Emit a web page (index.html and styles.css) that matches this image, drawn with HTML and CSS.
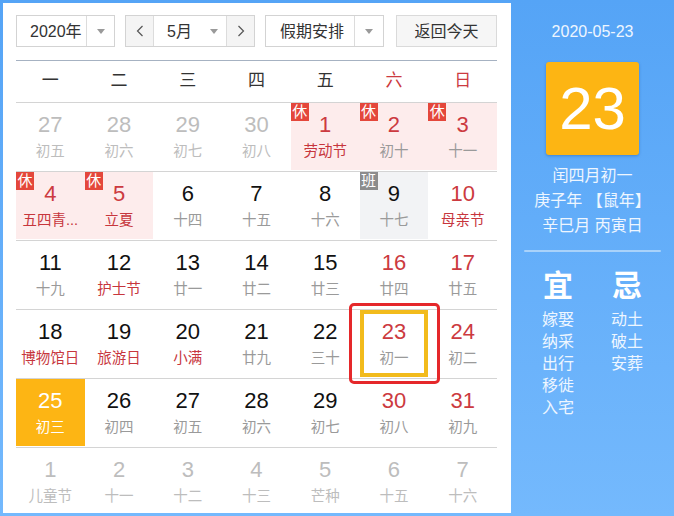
FILE: index.html
```html
<!DOCTYPE html>
<html lang="zh-CN">
<head>
<meta charset="utf-8">
<title>万年历</title>
<link rel="stylesheet" href="styles.css">
</head>
<body>
<div class="app">
  <div class="main">
    <div class="toolbar">
      <div class="select year">
        <span class="sel-text">2020年</span>
        <span class="sel-arrow"><i class="tri"></i></span>
      </div>
      <div class="month-group">
        <span class="nav-btn"><svg width="8" height="12" viewBox="0 0 8 12"><polyline points="6.5,1 1.5,6 6.5,11" fill="none" stroke="#555" stroke-width="1.2"/></svg></span>
        <span class="month-sel"><span class="sel-text">5月</span><i class="tri"></i></span>
        <span class="nav-btn"><svg width="8" height="12" viewBox="0 0 8 12"><polyline points="1.5,1 6.5,6 1.5,11" fill="none" stroke="#555" stroke-width="1.2"/></svg></span>
      </div>
      <div class="select holiday">
        <span class="sel-text">假期安排</span>
        <span class="sel-arrow"><i class="tri"></i></span>
      </div>
      <div class="today-btn">返回今天</div>
    </div>

    <div class="calendar">
      <div class="week-head">
        <span>一</span><span>二</span><span>三</span><span>四</span><span>五</span><span class="red">六</span><span class="red">日</span>
      </div>

      <div class="row">
        <div class="cell other"><span class="num">27</span><span class="lunar">初五</span></div>
        <div class="cell other"><span class="num">28</span><span class="lunar">初六</span></div>
        <div class="cell other"><span class="num">29</span><span class="lunar">初七</span></div>
        <div class="cell other"><span class="num">30</span><span class="lunar">初八</span></div>
        <div class="cell rest"><i class="badge">休</i><span class="num red">1</span><span class="lunar fest">劳动节</span></div>
        <div class="cell rest"><i class="badge">休</i><span class="num red">2</span><span class="lunar">初十</span></div>
        <div class="cell rest"><i class="badge">休</i><span class="num red">3</span><span class="lunar">十一</span></div>
      </div>

      <div class="row">
        <div class="cell rest"><i class="badge">休</i><span class="num red">4</span><span class="lunar fest">五四青...</span></div>
        <div class="cell rest"><i class="badge">休</i><span class="num red">5</span><span class="lunar fest">立夏</span></div>
        <div class="cell"><span class="num">6</span><span class="lunar">十四</span></div>
        <div class="cell"><span class="num">7</span><span class="lunar">十五</span></div>
        <div class="cell"><span class="num">8</span><span class="lunar">十六</span></div>
        <div class="cell work"><i class="badge grey">班</i><span class="num">9</span><span class="lunar">十七</span></div>
        <div class="cell"><span class="num red">10</span><span class="lunar fest">母亲节</span></div>
      </div>

      <div class="row">
        <div class="cell"><span class="num">11</span><span class="lunar">十九</span></div>
        <div class="cell"><span class="num">12</span><span class="lunar fest">护士节</span></div>
        <div class="cell"><span class="num">13</span><span class="lunar">廿一</span></div>
        <div class="cell"><span class="num">14</span><span class="lunar">廿二</span></div>
        <div class="cell"><span class="num">15</span><span class="lunar">廿三</span></div>
        <div class="cell"><span class="num red">16</span><span class="lunar">廿四</span></div>
        <div class="cell"><span class="num red">17</span><span class="lunar">廿五</span></div>
      </div>

      <div class="row">
        <div class="cell"><span class="num">18</span><span class="lunar fest">博物馆日</span></div>
        <div class="cell"><span class="num">19</span><span class="lunar fest">旅游日</span></div>
        <div class="cell"><span class="num">20</span><span class="lunar fest">小满</span></div>
        <div class="cell"><span class="num">21</span><span class="lunar">廿九</span></div>
        <div class="cell"><span class="num">22</span><span class="lunar">三十</span></div>
        <div class="cell today"><span class="num red">23</span><span class="lunar">初一</span><i class="mark"></i></div>
        <div class="cell"><span class="num red">24</span><span class="lunar">初二</span></div>
      </div>

      <div class="row">
        <div class="cell selected"><span class="num">25</span><span class="lunar">初三</span></div>
        <div class="cell"><span class="num">26</span><span class="lunar">初四</span></div>
        <div class="cell"><span class="num">27</span><span class="lunar">初五</span></div>
        <div class="cell"><span class="num">28</span><span class="lunar">初六</span></div>
        <div class="cell"><span class="num">29</span><span class="lunar">初七</span></div>
        <div class="cell"><span class="num red">30</span><span class="lunar">初八</span></div>
        <div class="cell"><span class="num red">31</span><span class="lunar">初九</span></div>
      </div>

      <div class="row">
        <div class="cell other"><span class="num">1</span><span class="lunar">儿童节</span></div>
        <div class="cell other"><span class="num">2</span><span class="lunar">十一</span></div>
        <div class="cell other"><span class="num">3</span><span class="lunar">十二</span></div>
        <div class="cell other"><span class="num">4</span><span class="lunar">十三</span></div>
        <div class="cell other"><span class="num">5</span><span class="lunar">芒种</span></div>
        <div class="cell other"><span class="num">6</span><span class="lunar">十五</span></div>
        <div class="cell other"><span class="num">7</span><span class="lunar">十六</span></div>
      </div>
    </div>
  </div>

  <div class="side">
    <div class="side-date">2020-05-23</div>
    <div class="big-day">23</div>
    <div class="side-line first">闰四月初一</div>
    <div class="side-line">庚子年 【鼠年】</div>
    <div class="side-line">辛巳月 丙寅日</div>
    <div class="side-sep"></div>
    <div class="yiji">
      <div class="yj-col">
        <div class="yj-title">宜</div>
        <div class="yj-item">嫁娶</div>
        <div class="yj-item">纳采</div>
        <div class="yj-item">出行</div>
        <div class="yj-item">移徙</div>
        <div class="yj-item">入宅</div>
      </div>
      <div class="yj-col">
        <div class="yj-title">忌</div>
        <div class="yj-item">动土</div>
        <div class="yj-item">破土</div>
        <div class="yj-item">安葬</div>
      </div>
    </div>
  </div>
</div>
</body>
</html>
```

FILE: styles.css
```css
* { box-sizing: border-box; }
html, body {
  margin: 0;
  padding: 0;
  width: 674px;
  height: 516px;
  overflow: hidden;
}
body {
  font-family: "Liberation Sans", "Noto Sans CJK SC", sans-serif;
  background: linear-gradient(to bottom, #55a4f6, #74b9fd);
}
.app {
  display: flex;
  width: 674px;
  height: 516px;
}
.main {
  margin: 3px 0 3px 3px;
  width: 508px;
  height: 510px;
  background: #fff;
  padding: 12px 14px 0 13px;
  overflow: hidden;
  position: relative;
}
.toolbar {
  display: flex;
  height: 32px;
  font-size: 16px;
  color: #333;
}
.select {
  display: flex;
  height: 32px;
  border: 1px solid #d3d3d3;
  background: #fff;
}
.sel-text {
  line-height: 31px;
  white-space: nowrap;
}
.year { width: 99px; }
.year .sel-text { width: 69px; padding-left: 13px; }
.sel-arrow {
  flex: 1;
  border-left: 1px solid #dcdcdc;
  display: flex;
  align-items: center;
  justify-content: center;
}
.tri {
  display: block;
  width: 0;
  height: 0;
  border-left: 4px solid transparent;
  border-right: 4px solid transparent;
  border-top: 5px solid #9a9a9a;
}
.month-group {
  display: flex;
  margin-left: 10px;
  width: 130px;
  height: 32px;
  border: 1px solid #d3d3d3;
}
.nav-btn {
  width: 27px;
  background: #f4f4f4;
  display: flex;
  align-items: center;
  justify-content: center;
}
.month-sel {
  flex: 1;
  display: flex;
  align-items: center;
  padding-left: 13px;
  border-left: 1px solid #dcdcdc;
  border-right: 1px solid #dcdcdc;
  background: #fff;
}
.month-sel .tri { margin-left: 18px; }
.holiday {
  margin-left: 10px;
  width: 119px;
}
.holiday .sel-text { width: 88px; padding-left: 14px; }
.today-btn {
  margin-left: 12px;
  width: 101px;
  height: 32px;
  border: 1px solid #dadada;
  background: #f6f6f6;
  line-height: 31px;
  text-align: center;
}

.calendar {
  margin-top: 13px;
  width: 481px;
}
.week-head {
  display: grid;
  grid-template-columns: repeat(7, 1fr);
  border-top: 1px solid #a6b2c2;
  height: 42px;
  font-size: 17px;
  line-height: 39px;
  color: #333;
  text-align: center;
}
.red { color: #cc3a40; }
.row {
  display: grid;
  grid-template-columns: repeat(7, 1fr);
  border-top: 1px solid #d4d4d4;
  padding-bottom: 1px;
}
.cell {
  position: relative;
  height: 67px;
  display: flex;
  flex-direction: column;
  align-items: center;
  padding: 9px 2px 0;
  text-align: center;
  min-width: 0;
}
.num {
  font-size: 22px;
  line-height: 26px;
  color: #111;
}
.lunar {
  margin-top: 2px;
  font-size: 14.5px;
  line-height: 22px;
  color: #9a9a9a;
  white-space: nowrap;
}
.num.red { color: #cc3a40; }
.lunar.fest { color: #c7363d; }
.other .num, .other .lunar { color: #bdbdbd; }
.rest { background: #fdecec; }
.work { background: #f2f3f5; }
.badge {
  position: absolute;
  top: 0;
  left: 0;
  width: 18px;
  height: 18px;
  background: #e4473b;
  color: #fff;
  font-style: normal;
  font-size: 15px;
  line-height: 18px;
  text-align: center;
}
.badge.grey { background: #8c8c8c; }
.today {
  border: 4px solid #f2bb1c;
  padding-top: 5px;
}
.mark {
  position: absolute;
  top: -11px;
  left: -15px;
  width: 91px;
  height: 81px;
  border: 3px solid #e5282a;
  border-radius: 5px;
}
.selected { background: #fdb514; }
.selected .num, .selected .lunar { color: #fff; }

.side {
  width: 163px;
  height: 516px;
  color: #eef6ff;
  display: flex;
  flex-direction: column;
  align-items: center;
  padding-top: 22px;
}
.side-date {
  font-size: 16px;
  line-height: 20px;
}
.big-day {
  margin-top: 20px;
  width: 93px;
  height: 93px;
  background: #fdb513;
  border-radius: 3px;
  box-shadow: 0 1px 3px rgba(0, 60, 140, 0.35);
  color: #fff;
  font-size: 60px;
  line-height: 93px;
  text-align: center;
}
.side-line {
  font-size: 16px;
  line-height: 25px;
  white-space: nowrap;
}
.side-line.first { margin-top: 8px; }
.side-sep {
  margin-top: 12px;
  width: 137px;
  height: 2px;
  background: #a9d2fa;
  border-radius: 1px;
}
.yiji {
  margin-top: 17px;
  display: grid;
  grid-template-columns: 60px 60px;
  column-gap: 9px;
  align-self: flex-start;
  margin-left: 17px;
}
.yj-col {
  display: flex;
  flex-direction: column;
  align-items: center;
}
.yj-title {
  font-size: 30px;
  line-height: 34px;
  font-weight: bold;
  color: #fff;
  margin-bottom: 6px;
}
.yj-item {
  font-size: 16px;
  line-height: 22px;
}
```
